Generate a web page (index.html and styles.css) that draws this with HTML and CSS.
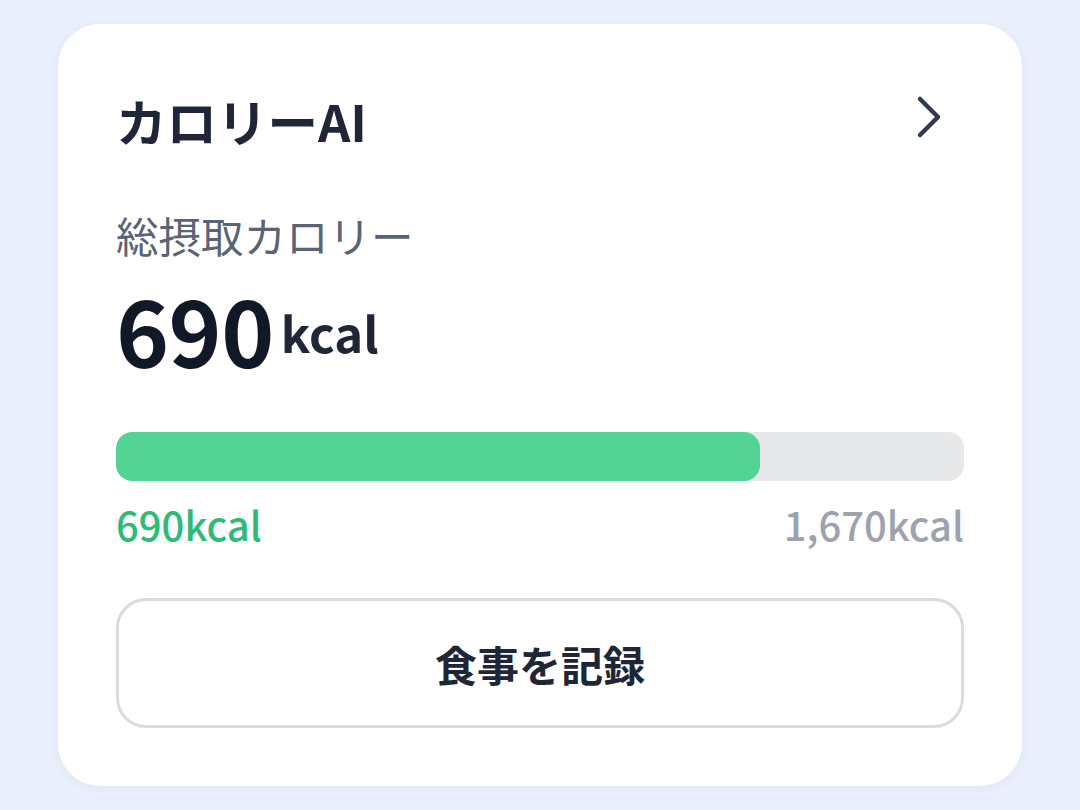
FILE: index.html
```html
<!DOCTYPE html>
<html lang="ja">
<head>
<meta charset="utf-8">
<link rel="stylesheet" href="styles.css">
</head>
<body>
<div class="card">
  <div class="header">
    <h1 class="title">カロリーAI</h1>
    <svg class="chevron" width="30" height="44" viewBox="0 0 30 44"><path d="M6 4 L24 22 L6 40" fill="none" stroke="#2f3a4d" stroke-width="4.5" stroke-linecap="round" stroke-linejoin="round"/></svg>
  </div>
  <div class="label">総摂取カロリー</div>
  <div class="total"><span class="num">690</span><span class="unit">kcal</span></div>
  <div class="bar"><div class="fill" style="width:76%"></div></div>
  <div class="range"><span class="cur">690kcal</span><span class="goal">1,670kcal</span></div>
  <button class="btn">食事を記録</button>
</div>
</body>
</html>
```
FILE: styles.css
```css
html, body { margin: 0; padding: 0; }
body {
  background: #e9effc;
  font-family: "Noto Sans CJK JP", "Noto Sans", sans-serif;
  width: 1080px;
  height: 810px;
  overflow: hidden;
}
.card {
  box-sizing: border-box;
  margin: 24px 0 0 58px;
  width: 964px;
  height: 762px;
  background: #ffffff;
  border-radius: 42px;
  padding: 67px 58px 58px;
  box-shadow: 0 2px 10px rgba(60, 80, 130, 0.06);
  display: flex;
  flex-direction: column;
}
.header {
  display: flex;
  justify-content: space-between;
  align-items: center;
  height: 58px;
}
.title {
  margin: 0;
  font-size: 50.5px;
  line-height: 58px;
  font-weight: 700;
  color: #1f2637;
}
.chevron { margin-right: 20px; margin-top: -6px; }
.label {
  margin-top: 56px;
  font-size: 42.5px;
  line-height: 60px;
  color: #5b6475;
}
.total {
  margin-top: 19px;
  display: flex;
  align-items: flex-start;
  line-height: 1;
  height: 90px;
}
.num {
  font-size: 90px;
  font-weight: 700;
  color: #111827;
  letter-spacing: -0.5px;
}
.unit {
  margin-left: 7px;
  margin-top: 23px;
  font-size: 49px;
  font-weight: 700;
  color: #1f2637;
}
.bar {
  margin-top: 58px;
  height: 49px;
  border-radius: 16px;
  background: #e7e8ea;
  overflow: hidden;
}
.fill {
  height: 100%;
  background: #53d495;
  border-radius: 16px;
}
.range {
  margin-top: 17px;
  display: flex;
  justify-content: space-between;
  font-size: 40px;
  line-height: 52px;
  font-weight: 500;
}
.cur { color: #2dbb76; }
.goal { color: #9ca3af; }
.btn {
  margin-top: 48px;
  height: 130px;
  box-sizing: border-box;
  border: 3px solid #d9dbde;
  border-radius: 30px;
  background: #ffffff;
  font-family: inherit;
  font-size: 42px;
  font-weight: 700;
  color: #1f2637;
  padding: 0;
}
```
